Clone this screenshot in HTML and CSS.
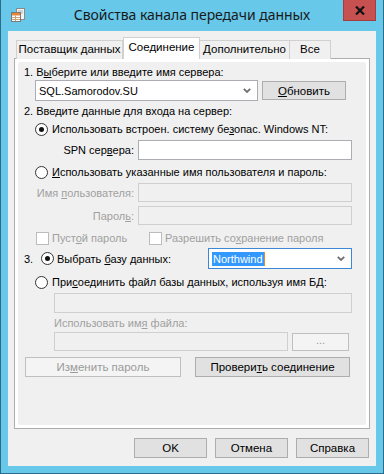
FILE: index.html
```html
<!DOCTYPE html>
<html lang="ru">
<head>
<meta charset="utf-8">
<title>Свойства канала передачи данных</title>
<link rel="stylesheet" href="styles.css">
</head>
<body>
<div class="window">
  <div class="titlebar">
    <div class="tb-left">
      <svg class="app-icon" width="16" height="16" viewBox="0 0 16 16">
        <rect x="6.5" y="1.5" width="8" height="11" fill="#f4f4f4" stroke="#8a8a8a"/>
        <line x1="8" y1="4" x2="13" y2="4" stroke="#b0b0b0"/>
        <line x1="8" y1="6" x2="13" y2="6" stroke="#b0b0b0"/>
        <rect x="1.5" y="5.5" width="9" height="9" fill="#ffffff" stroke="#7a7a7a"/>
        <rect x="2" y="6" width="8" height="2.5" fill="#e8873a"/>
        <line x1="2" y1="10.5" x2="10" y2="10.5" stroke="#c9a27a"/>
        <line x1="2" y1="12.5" x2="10" y2="12.5" stroke="#c9a27a"/>
        <line x1="5.5" y1="8.5" x2="5.5" y2="14" stroke="#c9a27a"/>
      </svg>
    </div>
    <div class="title">Свойства канала передачи данных</div>
    <div class="tb-right">
      <div class="close">
        <svg width="10" height="9" viewBox="0 0 10 9">
          <path d="M1 0.5 L9 8.5 M9 0.5 L1 8.5" stroke="#111" stroke-width="2.2"/>
        </svg>
      </div>
    </div>
  </div>

  <div class="client">
    <div class="tabs">
      <div class="tab tab-w1">Поставщик данных</div>
      <div class="tab tab-w2 active">Соединение</div>
      <div class="tab tab-w3">Дополнительно</div>
      <div class="tab tab-w4">Все</div>
    </div>

    <div class="panel">
      <div class="panel-inner">
        <div class="row label-row r1">1. В<u>ы</u>берите или введите имя сервера:</div>

        <div class="row server-row">
          <div class="combo server-combo">
            <span class="combo-text">SQL.Samorodov.SU</span>
            <svg class="chev" width="8" height="5" viewBox="0 0 8 5"><path d="M0.8 0.8 L4 4 L7.2 0.8" fill="none" stroke="#707070" stroke-width="1.8"/></svg>
          </div>
          <div class="btn refresh-btn"><u>О</u>бновить</div>
        </div>

        <div class="row label-row r3">2. Введите данные для входа на сервер:</div>

        <div class="row radio-row r4">
          <span class="radio checked"></span>
          <span>Использовать встроен. систему бе<u>з</u>опас. Windows NT:</span>
        </div>

        <div class="row field-row r5">
          <span class="field-label">SPN сер<u>в</u>ера:</span>
          <div class="input"></div>
        </div>

        <div class="row radio-row r6">
          <span class="radio"></span>
          <span><u>И</u>спользовать указанные имя пользователя и пароль:</span>
        </div>

        <div class="row field-row r7">
          <span class="field-label disabled">Имя <u>п</u>ользователя:</span>
          <div class="input disabled-input"></div>
        </div>

        <div class="row field-row r8">
          <span class="field-label disabled">Парол<u>ь</u>:</span>
          <div class="input disabled-input"></div>
        </div>

        <div class="row check-row r9">
          <div class="check-item first-check">
            <span class="checkbox"></span>
            <span class="disabled">Пуст<u>о</u>й пароль</span>
          </div>
          <div class="check-item">
            <span class="checkbox"></span>
            <span class="disabled">Разрешить со<u>х</u>ранение пароля</span>
          </div>
        </div>

        <div class="row db-row r10">
          <span class="num">3.</span>
          <span class="radio checked"></span>
          <span class="db-label">Выбрать <u>б</u>азу данных:</span>
          <div class="combo db-combo">
            <span class="combo-text"><span class="selected">Northwind</span></span>
            <svg class="chev" width="8" height="5" viewBox="0 0 8 5"><path d="M0.8 0.8 L4 4 L7.2 0.8" fill="none" stroke="#707070" stroke-width="1.8"/></svg>
          </div>
        </div>

        <div class="row radio-row r11">
          <span class="radio"></span>
          <span>При<u>с</u>оединить файл базы данных, используя имя БД:</span>
        </div>

        <div class="row indent-row r12">
          <div class="input disabled-input"></div>
        </div>

        <div class="row indent-row label-row r13">
          <span class="disabled">Использовать им<u>я</u> файла:</span>
        </div>

        <div class="row indent-row file-row r14">
          <div class="input disabled-input file-input"></div>
          <div class="btn disabled-btn dots-btn">...</div>
        </div>

        <div class="row action-row r15">
          <div class="btn disabled-btn change-btn">Из<u>м</u>енить пароль</div>
          <div class="btn check-btn">Провери<u>т</u>ь соединение</div>
        </div>
      </div>
    </div>

    <div class="footer">
      <div class="btn footer-btn">OK</div>
      <div class="btn footer-btn">Отмена</div>
      <div class="btn footer-btn">Справка</div>
    </div>
  </div>
</div>
</body>
</html>
```

FILE: styles.css
```css
* { box-sizing: border-box; }

html, body {
  margin: 0;
  padding: 0;
  background: #67c8ea;
}

body {
  font-family: "Liberation Sans", Arial, sans-serif;
  font-size: 11px;
  color: #000;
}

u { text-decoration: underline; text-underline-offset: 1px; }

.window {
  width: 384px;
  height: 474px;
  border: 1px solid #2f6b88;
  border-top: none;
  background: #67c8ea;
  padding: 0 7px 7px 7px;
}

.titlebar {
  height: 31px;
  display: grid;
  grid-template-columns: 1fr auto 1fr;
  align-items: start;
}

.tb-left {
  padding: 7px 0 0 2px;
}

.app-icon { display: block; }

.title {
  font-family: "Noto Sans", "Open Sans", sans-serif;
  font-size: 14px;
  color: #1a1a1a;
  padding-top: 5px;
  letter-spacing: -0.05px;
}

.tb-right {
  display: flex;
  justify-content: flex-end;
}

.close {
  width: 33px;
  height: 21px;
  background: #c75050;
  border: 1px solid #a53d3d;
  border-top: none;
  display: flex;
  align-items: center;
  justify-content: center;
}

.close svg { display: block; }

.client {
  height: 435px;
  background: #f0f0f0;
  display: flex;
  flex-direction: column;
}

.tabs {
  height: 28px;
  display: flex;
  align-items: flex-end;
  padding-left: 8px;
  position: relative;
  z-index: 1;
  margin-bottom: -1px;
}

.tab {
  height: 19px;
  background: #f0f0f0;
  border: 1px solid #d0d0d0;
  border-bottom: none;
  text-align: center;
  line-height: 17px;
  font-size: 11.5px;
  margin-right: -1px;
}

.tab.active {
  height: 22px;
  background: #fff;
  border-color: #d0d0d0;
  line-height: 17px;
  padding-top: 1px;
  margin-left: 1px;
}

.tab-w1 { width: 107px; }
.tab-w2 { width: 77px; }
.tab-w3 { width: 91px; }
.tab-w4 { width: 42px; }

.panel {
  margin-left: 6px;
  width: 356px;
  height: 371px;
  border: 1px solid #adadad;
  background: #fff;
  padding: 3px;
}

.panel-inner {
  height: 100%;
  background: #f0f0f0;
  border-radius: 2px;
  padding: 3px 14px 0 6px;
  display: flex;
  flex-direction: column;
}

.row {
  display: flex;
  align-items: center;
  flex: none;
  white-space: nowrap;
}

.label-row { height: 14px; }

.r1 { margin-top: 0; }
.server-row { height: 21px; margin-top: 1px; padding-left: 11px; }
.r3 { margin-top: 3px; }
.radio-row { height: 14px; padding-left: 11px; gap: 4px; }
.r4 { margin-top: 4px; }
.field-row { height: 20px; gap: 4px; }
.r5 { margin-top: 4px; }
.r6 { margin-top: 5px; }
.r7 { margin-top: 4px; height: 19px; }
.r8 { margin-top: 4px; height: 19px; }
.r9 { margin-top: 6px; height: 14px; padding-left: 12px; }
.r10 { margin-top: 3px; height: 21px; }
.r11 { margin-top: 6px; }
.indent-row { padding-left: 30px; }
.r12 { margin-top: 4px; height: 20px; }
.r13 { margin-top: 3px; }
.r14 { margin-top: 2px; height: 19px; gap: 4px; }
.action-row { margin-top: 6px; height: 20px; padding-left: 1px; gap: 14px; }

.field-label {
  width: 110px;
  text-align: right;
  flex: none;
}

.disabled { color: #a0a0a0; }

.input {
  flex: 1;
  height: 100%;
  background: #fff;
  border: 1px solid #abadb3;
}

.disabled-input {
  background: #f0f0f0;
  border-color: #cfcfcf;
}

.file-input { flex: none; width: 234px; }

.combo {
  height: 21px;
  background: #fff;
  border: 1px solid #abadb3;
  display: flex;
  align-items: center;
  justify-content: space-between;
  padding: 0 6px 0 3px;
}

.server-combo { width: 223px; }

.combo-text { line-height: 14px; }

.chev { display: block; }

.db-combo {
  flex: 1;
  border-color: #3c87d6;
}

.selected {
  background: #3399ff;
  color: #fff;
  padding: 1px 1px;
  border-right: 1px solid #e08a2a;
}

.num { width: 17px; flex: none; }

.db-label { margin-left: 3px; width: 151px; flex: none; }

.radio {
  width: 13px;
  height: 13px;
  border: 1px solid #333;
  border-radius: 50%;
  background: #fff;
  display: inline-flex;
  align-items: center;
  justify-content: center;
  flex: none;
}

.radio.checked::after {
  content: "";
  width: 5px;
  height: 5px;
  border-radius: 50%;
  background: #111;
}

.checkbox {
  width: 13px;
  height: 13px;
  border: 1px solid #bcbcbc;
  background: #fff;
  flex: none;
}

.check-item {
  display: flex;
  align-items: center;
  gap: 3px;
}

.first-check { width: 113px; }

.btn {
  background: #e1e1e1;
  border: 1px solid #adadad;
  display: flex;
  align-items: center;
  justify-content: center;
  white-space: nowrap;
}

.refresh-btn {
  width: 84px;
  height: 19px;
  margin-left: 4px;
  font-size: 11.5px;
}

.disabled-btn {
  background: #f4f4f4;
  border-color: #bfbfbf;
  color: #9a9a9a;
}

.dots-btn { width: 57px; height: 18px; align-items: flex-start; line-height: 12px; }

.change-btn { width: 156px; height: 20px; font-size: 11.5px; }
.check-btn { width: 155px; height: 20px; font-size: 11.5px; }

.footer {
  margin-top: 9px;
  display: flex;
  justify-content: flex-end;
  gap: 8px;
  padding-right: 7px;
}

.footer-btn {
  width: 73px;
  height: 20px;
  font-size: 11.5px;
}
```
